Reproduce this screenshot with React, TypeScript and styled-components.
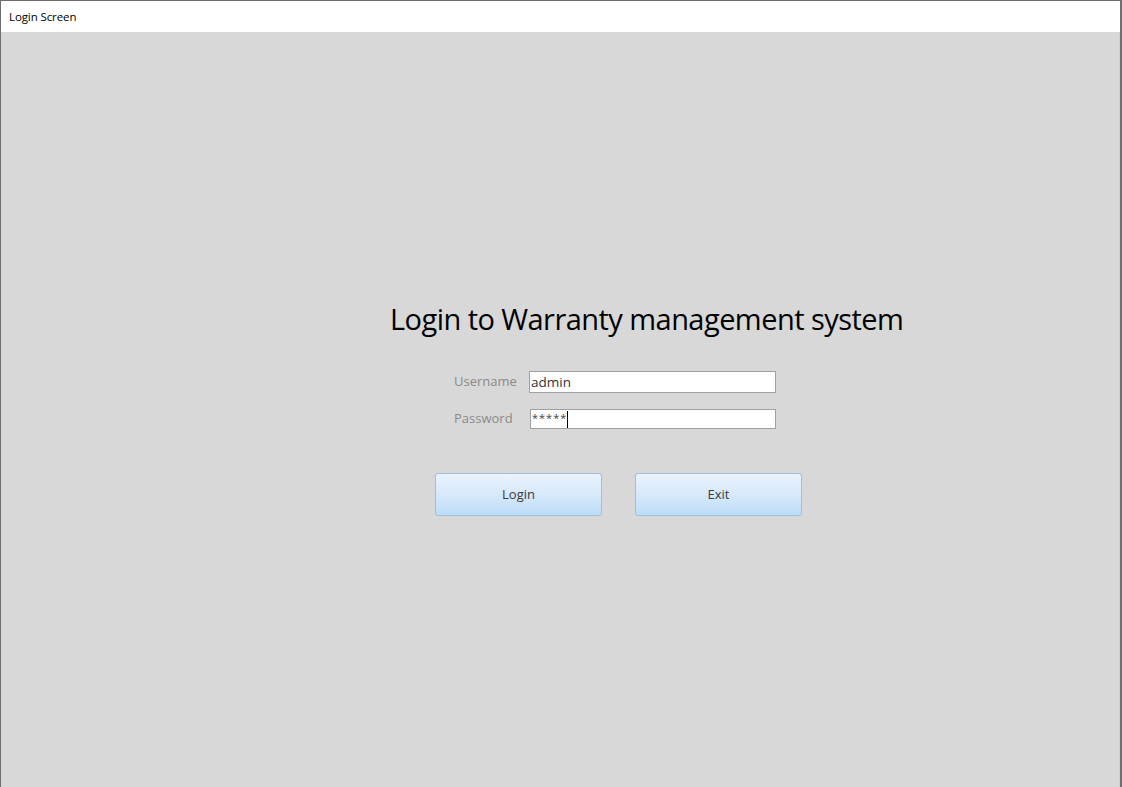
import styled, { createGlobalStyle } from "styled-components";

const Global = createGlobalStyle`
  html, body {
    margin: 0;
    padding: 0;
    background: #ffffff;
  }
  body {
    font-family: "Open Sans", "Noto Sans", sans-serif;
  }
`;

const Window = styled.div`
  width: 1122px;
  height: 787px;
  box-sizing: border-box;
  border: 1px solid #6e6e6e;
  border-bottom: none;
  border-right: 2px solid #6e6e6e;
  display: flex;
  flex-direction: column;
  background: #d8d8d8;
`;

const TitleBar = styled.div`
  height: 31px;
  background: #ffffff;
  display: flex;
  align-items: center;
  padding-left: 8px;
  font-size: 11.5px;
  letter-spacing: -0.1px;
  color: #000;
`;

const Content = styled.div`
  flex: 1;
  background: #d8d8d8;
  border-right: 1px solid #cfcfcf;
  padding: 267px 0 0 389px;
`;

const Heading = styled.h1`
  margin: 0;
  font-family: "Open Sans", sans-serif;
  font-weight: 400;
  font-size: 29px;
  line-height: 40px;
  color: #000;
  letter-spacing: -0.55px;
`;

const Fields = styled.div`
  margin-top: 32px;
  margin-left: 64px;
  display: grid;
  grid-template-columns: 75px 247px;
  row-gap: 16px;
  align-items: center;
`;

const Label = styled.label`
  font-size: 13px;
  color: #8a8a8a;
  position: relative;
  top: -1px;
`;

const Field = styled.div<{ $pad?: number; $h?: number }>`
  height: ${(p) => p.$h ?? 22}px;
  box-sizing: border-box;
  border: 1px solid #a0a0a0;
  background: #ffffff;
  margin-left: ${(p) => p.$pad ?? 0}px;
  display: flex;
  align-items: center;
  padding-left: 1px;
  font-size: 13.5px;
  color: #333;
`;

const Mask = styled.span`
  font-size: 11px;
  letter-spacing: 1px;
  color: #444;
  position: relative;
  top: -2px;
`;

const Caret = styled.span`
  display: inline-block;
  width: 1px;
  height: 17px;
  background: #000;
`;

const Buttons = styled.div`
  margin-top: 44px;
  margin-left: 45px;
  display: flex;
  gap: 33px;
`;

const Button = styled.button`
  width: 167px;
  height: 43px;
  box-sizing: border-box;
  border: 1px solid #9cbfe2;
  border-radius: 3px;
  background: linear-gradient(to bottom, #eaf3fd 0%, #d7e9fb 50%, #bcdcf9 100%);
  font-family: "Open Sans", sans-serif;
  font-size: 13px;
  color: #3a3a3a;
  padding: 0 0 2px;
`;

export default function App() {
  return (
    <>
      <Global />
      <Window>
        <TitleBar>Login Screen</TitleBar>
        <Content>
          <Heading>Login to Warranty management system</Heading>
          <Fields>
            <Label>Username</Label>
            <Field>admin</Field>
            <Label>Password</Label>
            <Field $pad={1} $h={20}>
              <Mask>*****</Mask>
              <Caret />
            </Field>
          </Fields>
          <Buttons>
            <Button>Login</Button>
            <Button>Exit</Button>
          </Buttons>
        </Content>
      </Window>
    </>
  );
}
